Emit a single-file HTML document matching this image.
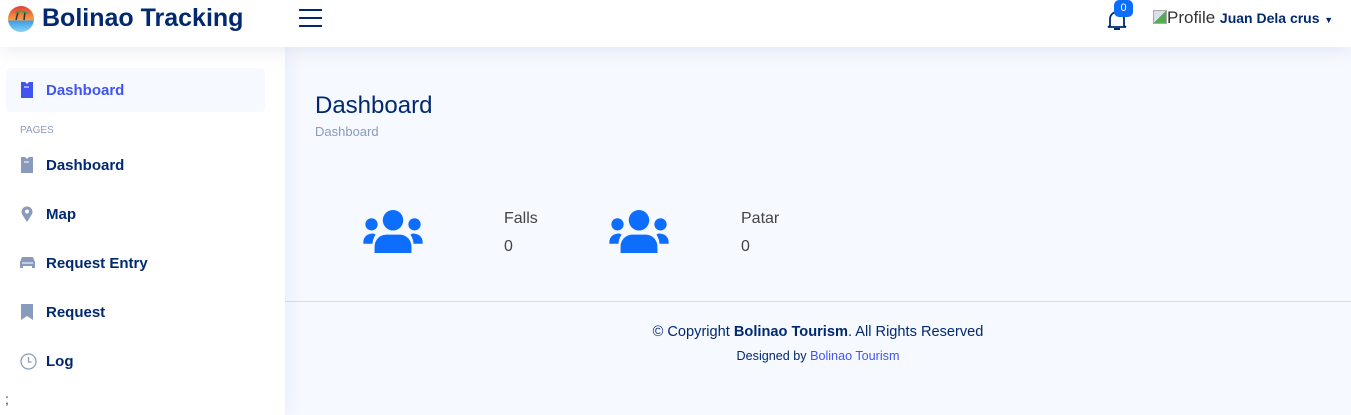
<!DOCTYPE html>
<html><head><meta charset="utf-8"><style>
*{box-sizing:border-box;margin:0;padding:0}
body{width:1351px;height:415px;overflow:hidden;background:#f6f9ff;font-family:"Liberation Sans",sans-serif;color:#012970;position:relative}
.hdr{position:absolute;left:0;top:0;width:1351px;height:47px;background:#fff;box-shadow:0 2px 20px rgba(1,41,112,.1);z-index:3}
.logo{position:absolute;left:7px;top:4px;font-size:25px;font-weight:bold;color:#012970;letter-spacing:0}
.logo svg{position:absolute;left:0;top:1px}
.logo span{position:absolute;left:35px;top:0;white-space:nowrap}
.side{position:absolute;left:0;top:47px;width:285px;height:368px;background:#fff;box-shadow:0 0 20px rgba(1,41,112,.08);z-index:2}
.it{position:absolute;left:6px;width:259px;height:44px;font-size:15px;font-weight:bold;color:#012970}
.it span{position:absolute;left:40px;top:14px}
.it svg{position:absolute;left:15px;top:14px}
.act{background:#f6f9ff;color:#4154f1;border-radius:4px}
</style></head><body>
<div class="hdr">
 <div class="logo">
  <svg width="28" height="28" viewBox="0 0 28 28"><defs><linearGradient id="g" x1="0" y1="0" x2="0" y2="1"><stop offset="0" stop-color="#e2403a"/><stop offset=".55" stop-color="#f4a340"/><stop offset=".56" stop-color="#3a9be8"/><stop offset="1" stop-color="#8ad0f5"/></linearGradient></defs><circle cx="14" cy="14" r="13" fill="url(#g)"/><path d="M9 15 L11 7 M17 15 L18 7" stroke="#333" stroke-width="1.5"/><path d="M8 7 l3 0 l3 -1 M15 7 l3 0 l3 1" stroke="#2a5" stroke-width="1.5" fill="none"/></svg>
  <span>Bolinao Tracking</span></div>
 <svg style="position:absolute;left:299px;top:8px" width="24" height="20"><path d="M0 2h23M0 10h23M0 18h23" stroke="#012970" stroke-width="2"/></svg>
 <svg style="position:absolute;left:1106px;top:9px" width="22" height="22" viewBox="0 0 22 22"><path d="M4 17V10a7 7 0 0 1 14 0v7l2 1H2z" fill="none" stroke="#012970" stroke-width="1.8"/><path d="M8 20h6" stroke="#012970" stroke-width="2"/></svg>
 <div style="position:absolute;left:1114px;top:0;width:19px;height:17px;background:#0d6efd;border-radius:5px;color:#fff;font-size:11px;text-align:center;line-height:16px">0</div>
 <div style="position:absolute;left:1153px;top:8px;font-size:17px;color:#333;white-space:nowrap"><span style="display:inline-block;width:14px;height:14px;border:1px solid #aaa;background:linear-gradient(135deg,#dde 50%,#5a5 50%);vertical-align:-1px"></span>Profile <b style="font-size:14px;color:#012970">Juan Dela crus</b> <span style="font-size:9px;color:#012970">▼</span></div>
</div>
<div class="side">
 <div class="it act" style="top:21px"><svg width="12" height="16"><path d="M0 0h4l2 2 2-2h4v16H0z" fill="#4154f1"/><path d="M3 5h5" stroke="#fff"/></svg><span>Dashboard</span></div>
 <div style="position:absolute;left:20px;top:78px;font-size:10px;color:#899bbd">PAGES</div>
 <div class="it" style="top:96px"><svg width="12" height="16"><path d="M0 0h4l2 2 2-2h4v16H0z" fill="#899bbd"/><path d="M3 5h5" stroke="#fff"/></svg><span>Dashboard</span></div>
 <div class="it" style="top:145px"><svg width="12" height="16"><path d="M6 16L1.5 9A5.5 5.5 0 1 1 10.5 9z" fill="#899bbd"/><circle cx="6" cy="5.5" r="2" fill="#fff"/></svg><span>Map</span></div>
 <div class="it" style="top:194px"><svg width="17" height="14" style="left:13px;top:15px"><path d="M3 1h11l2 5v6h-3v-2H4v2H1V6z" fill="#899bbd"/><path d="M3 7h11" stroke="#fff"/></svg><span>Request Entry</span></div>
 <div class="it" style="top:243px"><svg width="12" height="16"><path d="M0 0h12v16l-6-4-6 4z" fill="#899bbd"/></svg><span>Request</span></div>
 <div class="it" style="top:292px"><svg width="17" height="17" style="left:14px"><circle cx="8.5" cy="8.5" r="7.5" fill="none" stroke="#899bbd" stroke-width="1.3"/><path d="M8.5 4v5h3" fill="none" stroke="#899bbd" stroke-width="1.3"/></svg><span>Log</span></div>
 <div style="position:absolute;left:5px;top:344px;font-size:14px;color:#333">;</div>
</div>
<div style="position:absolute;left:315px;top:92px;font-size:24px;color:#012970">Dashboard</div>
<div style="position:absolute;left:315px;top:124px;font-size:13px;color:#899bbd">Dashboard</div>
<svg style="position:absolute;left:362px;top:210px" width="62" height="43" viewBox="0 0 60 42"><circle cx="30" cy="10" r="10" fill="#0d6efd"/><circle cx="9" cy="14" r="6" fill="#0d6efd"/><circle cx="51" cy="14" r="6" fill="#0d6efd"/><path d="M1 32c0-6 4-9 10-9l2 1c-2 3-3 6-3 9H1zM59 32c0-6-4-9-10-9l-2 1c2 3 3 6 3 9h9z" fill="#0d6efd"/><path d="M12 42V36c0-7 5-12 12-12h12c7 0 12 5 12 12v6z" fill="#0d6efd"/></svg>
<svg style="position:absolute;left:608px;top:210px" width="62" height="43" viewBox="0 0 60 42"><circle cx="30" cy="10" r="10" fill="#0d6efd"/><circle cx="9" cy="14" r="6" fill="#0d6efd"/><circle cx="51" cy="14" r="6" fill="#0d6efd"/><path d="M1 32c0-6 4-9 10-9l2 1c-2 3-3 6-3 9H1zM59 32c0-6-4-9-10-9l-2 1c2 3 3 6 3 9h9z" fill="#0d6efd"/><path d="M12 42V36c0-7 5-12 12-12h12c7 0 12 5 12 12v6z" fill="#0d6efd"/></svg>
<div style="position:absolute;left:504px;top:210px;font-size:16px;color:#444">Falls</div>
<div style="position:absolute;left:504px;top:238px;font-size:16px;color:#444">0</div>
<div style="position:absolute;left:741px;top:210px;font-size:16px;color:#444">Patar</div>
<div style="position:absolute;left:741px;top:238px;font-size:16px;color:#444">0</div>
<div style="position:absolute;left:285px;top:301px;width:1066px;border-top:1px solid #cddfff"></div>
<div style="position:absolute;left:285px;top:324px;width:1066px;text-align:center;font-size:14.6px;color:#012970">© Copyright <b>Bolinao Tourism</b>. All Rights Reserved</div>
<div style="position:absolute;left:285px;top:349px;width:1066px;text-align:center;font-size:12.6px;color:#012970">Designed by <span style="color:#4154f1">Bolinao Tourism</span></div>
</body></html>
